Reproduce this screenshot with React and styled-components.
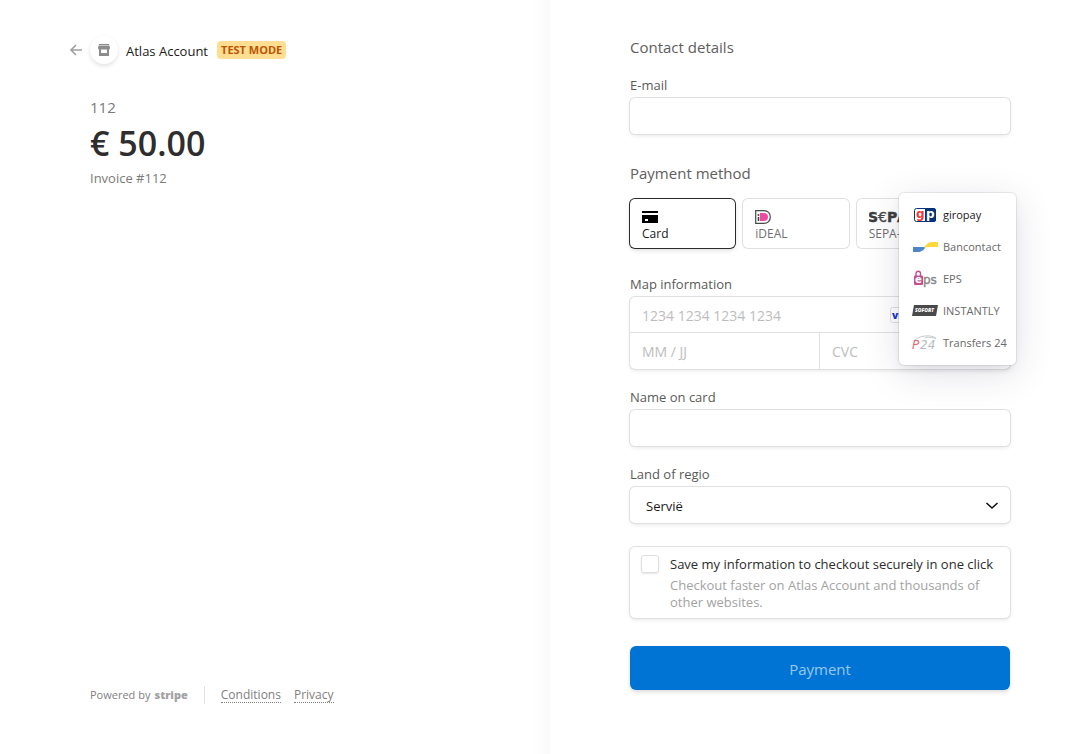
import React, { useState } from 'react'
import styled, { createGlobalStyle } from 'styled-components';

const GlobalStyle = createGlobalStyle`
  * {
    box-sizing: border-box;
  }
  body {
    margin: 0;
    background: #fff;
    color: #1a1a1a;
    font-family: 'Open Sans', 'Noto Sans', sans-serif;
  }
  button, input, select {
    font-family: inherit;
  }
`;

const Page = styled.div`
  display: grid;
  grid-template-columns: 550fr 537fr;
  min-height: 100vh;
`;

const Overview = styled.section`
  display: flex;
  flex-direction: column;
  justify-content: space-between;
  padding: 36px 32px 50px 68px;
  background: linear-gradient(to left, #fafafa, #fff) right / 19px 100% no-repeat;
`;

const Header = styled.header`
  display: flex;
  align-items: center;
  height: 28px;
  .back {
    display: flex;
    width: 22px;
    padding: 0 0 0 1px;
    border: none;
    background: none;
    cursor: pointer;
  }
  .avatar {
    display: flex;
    align-items: center;
    justify-content: center;
    width: 28px;
    height: 28px;
    border-radius: 50%;
    box-shadow: 0 2px 4px rgba(0, 0, 0, 0.12);
  }
  .name {
    margin: 0 9px 0 8px;
    padding-top: 2px;
    font-size: 13px;
    line-height: 20px;
  }
  .badge {
    padding: 0 4px;
    border-radius: 4px;
    background: #ffde92;
    color: #bb5504;
    font-size: 11px;
    font-weight: 700;
    line-height: 18px;
  }
`;

const Summary = styled.div`
  padding: 32px 0 0 22px;
  p {
    margin: 0;
    color: #7a7a7a;
    font-size: 13px;
    line-height: 22px;
  }
  .product {
    font-size: 15px;
  }
  h1 {
    margin: 0;
    padding-top: 2px;
    color: #2e2e2e;
    font-size: 34px;
    font-weight: 600;
    line-height: 47px;
  }
`;

const Footer = styled.footer`
  display: flex;
  align-items: center;
  padding-left: 22px;
  color: #808080;
  font-size: 12px;
  line-height: 18px;
  .powered {
    display: flex;
    gap: 4px;
    padding-right: 16px;
    border-right: 1px solid #e3e3e3;
    margin-right: 16px;
    font-size: 11px;
  }
  .powered b {
    color: #a3a3a3;
    font-weight: 800;
  }
  a {
    margin-right: 13px;
    color: inherit;
    line-height: 14px;
    text-decoration: none;
    border-bottom: 1px dotted #808080;
  }
`;

const Form = styled.form`
  width: calc(100% - 157px);
  min-width: 380px;
  margin-left: 80px;
  padding: 37px 0 64px;
`;

const Title = styled.h2`
  margin: 0;
  color: #5e5e5e;
  font-size: 15px;
  font-weight: 400;
  line-height: 20px;
`;

const Field = styled.div`
  margin-top: ${({ $gap }) => $gap}px;
  label {
    display: block;
    margin-bottom: 5px;
    color: #5a5a5a;
    font-size: 13px;
    line-height: 16px;
  }
`;

const ring = '0 0 0 1px #e0e0e0, 0 2px 4px rgba(0, 0, 0, 0.09)';

const Input = styled.input`
  display: block;
  width: 100%;
  height: 36px;
  padding: 0 12px;
  border: none;
  border-radius: 5px;
  background: #fff;
  box-shadow: ${ring};
  color: #1a1a1a;
  font-size: 14px;
`;

const Methods = styled.div`
  position: relative;
  display: grid;
  grid-template-columns: repeat(3, 1fr) 40px;
  gap: 8px;
  margin-top: 16px;
`;

const Method = styled.button`
  display: flex;
  flex-direction: column;
  align-items: flex-start;
  height: 49px;
  padding: 10px 12px 0;
  border: none;
  border-radius: 5px;
  background: #fff;
  box-shadow: ${({ $active }) => $active ? '0 0 0 1px #2b2b2b, 0 2px 5px rgba(0, 0, 0, 0.15)' : '0 0 0 1px #e0e0e0'};
  color: ${({ $active }) => $active ? '#1a1a1a' : '#707070'};
  font-size: 12px;
  line-height: 18px;
  white-space: nowrap;
  cursor: pointer;
  svg {
    flex: none;
  }
`;

const Menu = styled.div`
  position: absolute;
  top: -6px;
  right: -6px;
  z-index: 1;
  width: 117px;
  padding: 6px 0;
  border-radius: 5px;
  background: #fff;
  box-shadow: 0 0 0 1px rgba(0, 0, 0, 0.07), 0 8px 36px rgba(50, 50, 93, 0.15), 0 4px 8px rgba(0, 0, 0, 0.05);
  button {
    display: flex;
    align-items: center;
    gap: 5px;
    width: 100%;
    height: 32px;
    padding: 0 0 1px 13px;
    border: none;
    background: none;
    color: #6a6a6a;
    font-size: 11px;
    white-space: nowrap;
    cursor: pointer;
  }
  button:first-child {
    color: #1a1a1a;
  }
`;

const CardBox = styled.div`
  display: grid;
  grid-template-columns: 1fr 1fr;
  overflow: hidden;
  border-radius: 5px;
  box-shadow: ${ring};
  .number {
    display: flex;
    grid-column: span 2;
    align-items: center;
    border-bottom: 1px solid #e0e0e0;
    padding-right: 96px;
  }
  .number svg {
    flex: none;
  }
  input {
    width: 100%;
    height: 36px;
    padding: 0 12px;
    border: none;
    background: none;
    font-size: 14px;
  }
  .number input {
    height: 35px;
    padding-top: 2px;
  }
  .expiry {
    border-right: 1px solid #e0e0e0;
  }
  input::placeholder {
    color: #bdbdbd;
  }
`;

const SelectBox = styled.div`
  display: grid;
  align-items: center;
  select {
    grid-area: 1 / 1;
    width: 100%;
    height: 36px;
    padding: 2px 16px 0;
    border: none;
    border-radius: 5px;
    appearance: none;
    background: #fff;
    box-shadow: ${ring};
    color: #1a1a1a;
    font-size: 13px;
  }
  svg {
    grid-area: 1 / 1;
    justify-self: end;
    margin-right: 11px;
    pointer-events: none;
  }
`;

const SaveBox = styled.div`
  display: flex;
  gap: 11px;
  margin-top: 24px;
  padding: 8px 11px 7px;
  border-radius: 5px;
  box-shadow: ${ring};
  input {
    flex: none;
    width: 18px;
    height: 18px;
    margin: 0;
    border: 1px solid #dedede;
    border-radius: 3px;
    appearance: none;
    box-shadow: 0 1px 2px rgba(0, 0, 0, 0.1);
  }
  input:checked {
    background: #0074d4;
  }
  label {
    display: block;
    color: #2b2b2b;
    font-size: 13px;
    line-height: 18px;
    white-space: nowrap;
  }
  p {
    margin: 4px 0 0;
    color: #a3a3a3;
    font-size: 13px;
    line-height: 17px;
  }
`;

const PayButton = styled.button`
  width: 100%;
  height: 44px;
  margin-top: 28px;
  padding: 2px 0 0;
  border: none;
  border-radius: 6px;
  background: #0074d4;
  box-shadow: 0 2px 4px rgba(0, 0, 0, 0.14);
  color: #99c7ee;
  font-size: 15px;
  cursor: pointer;
`;

const BackIcon = () => (
  <svg width="14" height="14" viewBox="0 0 14 14" fill="none" stroke="#a0a0a0" strokeWidth="1.6">
    <path d="M13 7H2M7 2L2 7l5 5" />
  </svg>
)

const ShopIcon = () => (
  <svg width="14" height="14" viewBox="0 0 14 14" fill="#8c8c8c">
    <path d="M2 1h10v1H2zM1.500 2.500h11L13 5c0 .8-.4 1.300-1 1.500V13H2V6.500C1.400 6.300 1 5.800 1 5zM4 6.500V10h6V6.500z" fillRule="evenodd" />
  </svg>
)

const CardIcon = () => (
  <svg width="16" height="16" viewBox="0 0 16 16">
    <path d="M0 2h16v2H0zM0 6h16v8H0zM3 10v2h3v-2z" fill="#000" fillRule="evenodd" />
  </svg>
)

const IdealIcon = () => (
  <svg width="16" height="16" viewBox="0 0 16 16">
    <path d="M.7 1.700h8.100c4.200 0 6.500 2.400 6.500 6.300s-2.300 6.300-6.500 6.300H.7z" fill="#fff" stroke="#484848" strokeWidth="1.200" />
    <path d="M5 4h3.700C11.500 4 13 5.400 13 8s-1.500 4-4.300 4H5z" fill="#ee4aa0" />
    <circle cx="3.500" cy="6" r="1" fill="#444" />
    <path d="M2.700 8h1.600v4H2.700z" fill="#444" />
  </svg>
)

const SepaIcon = () => (
  <svg width="44" height="16" viewBox="0 0 44 16">
    <g fontFamily="DejaVu Sans" fontSize="14" fontWeight="700" fill="#3d3d3d" stroke="#3d3d3d" strokeWidth=".4">
      <text x="-1" y="13">S</text>
      <text x="9" y="13" fontWeight="400" fill="#555">€</text>
      <text x="18" y="13">P</text>
      <text x="28" y="13">A</text>
    </g>
  </svg>
)

const GiropayIcon = () => (
  <svg width="26" height="16" viewBox="0 0 26 16">
    <rect x="2.500" y="1.500" width="21" height="13" rx="2" fill="#fff" stroke="#04337b" />
    <path d="M13 1h8.500A2.500 2.500 0 0 1 24 3.500v9a2.500 2.500 0 0 1-2.500 2.500H13z" fill="#04337b" />
    <text x="4" y="11" fontFamily="DejaVu Sans" fontSize="12" fontWeight="700" fill="#ef3a3a">g</text>
    <text x="14" y="11" fontFamily="DejaVu Sans" fontSize="12" fontWeight="700" fill="#fff">p</text>
  </svg>
)

const BancontactIcon = () => (
  <svg width="26" height="16" viewBox="0 0 26 16">
    <path d="M1 8h12l1-1c-1.500 3.800-4 6-8 6H1z" fill="#4d86c8" />
    <path d="M26 8H15.500L12 9c2-3.800 4.500-6 8.500-6H26z" fill="#ffd93b" />
  </svg>
)

const EpsIcon = () => (
  <svg width="26" height="18" viewBox="0 0 26 18">
    <path d="M4 6V3.500C4 .5 8.500 .5 8.500 3.500V6" fill="none" stroke="#c2508f" strokeWidth="1.400" />
    <rect x="2" y="5.500" width="9" height="9.500" rx="1" fill="#c2508f" />
    <text x="3" y="13" fontFamily="DejaVu Sans" fontSize="10" fontWeight="700" fill="#fff">e</text>
    <text x="11" y="14" fontFamily="DejaVu Sans" fontSize="12" fill="#8a8a8a" stroke="#8a8a8a" strokeWidth=".4">ps</text>
  </svg>
)

const SofortIcon = () => (
  <svg width="26" height="16" viewBox="0 0 26 16">
    <path d="M2 2h24l-2 11H0z" fill="#4a4a4a" />
    <text x="3" y="9" fontFamily="Open Sans" fontSize="5" fontWeight="800" fontStyle="italic" fill="#fff">SOFORT</text>
  </svg>
)

const P24Icon = () => (
  <svg width="26" height="16" viewBox="0 0 26 16">
    <path d="M3 5C7 1 18-1 24 3M13 2.500c5-.5 9 0 11 1.500" fill="none" stroke="#b8bcc0" strokeWidth=".8" />
    <text x="0" y="14" fontFamily="DejaVu Sans" fontSize="12" fontStyle="italic" fill="#de6670">P</text>
    <text x="8" y="14" fontFamily="DejaVu Sans" fontSize="12" fontStyle="italic" fill="#b8bcc0">24</text>
  </svg>
)

const VisaIcon = () => (
  <svg width="24" height="16" viewBox="0 0 24 16">
    <rect x=".5" y=".5" width="23" height="15" rx="2" fill="#fff" stroke="#e0e0e0" />
    <text x="2" y="11.500" fontFamily="Open Sans" fontSize="9" fontWeight="800" fill="#1434cb">VISA</text>
  </svg>
)

const ChevronIcon = () => (
  <svg width="14" height="14" viewBox="0 0 14 14" fill="none" stroke="#111" strokeWidth="1.600">
    <path d="M1.500 5L7 10l5.500-5" />
  </svg>
)

const methods = [
  { id: 'card', name: 'Card', Icon: CardIcon },
  { id: 'ideal', name: 'iDEAL', Icon: IdealIcon },
  { id: 'sepa', name: 'SEPA-', Icon: SepaIcon },
]

const moreMethods = [
  { id: 'giropay', name: 'giropay', Icon: GiropayIcon },
  { id: 'bancontact', name: 'Bancontact', Icon: BancontactIcon },
  { id: 'eps', name: 'EPS', Icon: EpsIcon },
  { id: 'sofort', name: 'INSTANTLY', Icon: SofortIcon },
  { id: 'p24', name: 'Transfers 24', Icon: P24Icon },
]

const App = () => {
  const [method, setMethod] = useState('card');
  const [save, setSave] = useState(false);

  return (
    <>
      <GlobalStyle />
      <Page>
        <Overview>
          <div>
            <Header>
              <button className="back" aria-label="Back"><BackIcon /></button>
              <span className="avatar"><ShopIcon /></span>
              <span className="name">Atlas Account</span>
              <span className="badge">TEST MODE</span>
            </Header>
            <Summary>
              <p className="product">112</p>
              <h1>€ 50.00</h1>
              <p>Invoice #112</p>
            </Summary>
          </div>
          <Footer>
            <span className="powered">Powered by <b>stripe</b></span>
            <a href="#conditions">Conditions</a>
            <a href="#privacy">Privacy</a>
          </Footer>
        </Overview>

        <Form onSubmit={(e) => e.preventDefault()}>
          <Title>Contact details</Title>
          <Field $gap={20}>
            <label htmlFor="email">E-mail</label>
            <Input id="email" type="email" />
          </Field>

          <Field $gap={29}>
            <Title>Payment method</Title>
            <Methods>
              {methods.map(({ id, name, Icon }) => (
                <Method key={id} type="button" $active={method === id} onClick={() => setMethod(id)}>
                  <Icon />
                  {name}
                </Method>
              ))}
              <Menu>
                {moreMethods.map(({ id, name, Icon }) => (
                  <button key={id} type="button" onClick={() => setMethod(id)}>
                    <Icon />
                    {name}
                  </button>
                ))}
              </Menu>
            </Methods>
          </Field>

          <Field $gap={28}>
            <label htmlFor="number">Map information</label>
            <CardBox>
              <div className="number">
                <input id="number" placeholder="1234 1234 1234 1234" />
                <VisaIcon />
              </div>
              <input className="expiry" placeholder="MM / JJ" aria-label="Expiry" />
              <input placeholder="CVC" aria-label="CVC" />
            </CardBox>
          </Field>

          <Field $gap={20}>
            <label htmlFor="name">Name on card</label>
            <Input id="name" />
          </Field>

          <Field $gap={20}>
            <label htmlFor="country">Land of regio</label>
            <SelectBox>
              <select id="country">
                <option>Servië</option>
              </select>
              <ChevronIcon />
            </SelectBox>
          </Field>

          <SaveBox>
            <input id="save" type="checkbox" checked={save} onChange={() => setSave(!save)} />
            <div>
              <label htmlFor="save">Save my information to checkout securely in one click</label>
              <p>Checkout faster on Atlas Account and thousands of other websites.</p>
            </div>
          </SaveBox>

          <PayButton type="submit">Payment</PayButton>
        </Form>
      </Page>
    </>
  )
}

export default App
